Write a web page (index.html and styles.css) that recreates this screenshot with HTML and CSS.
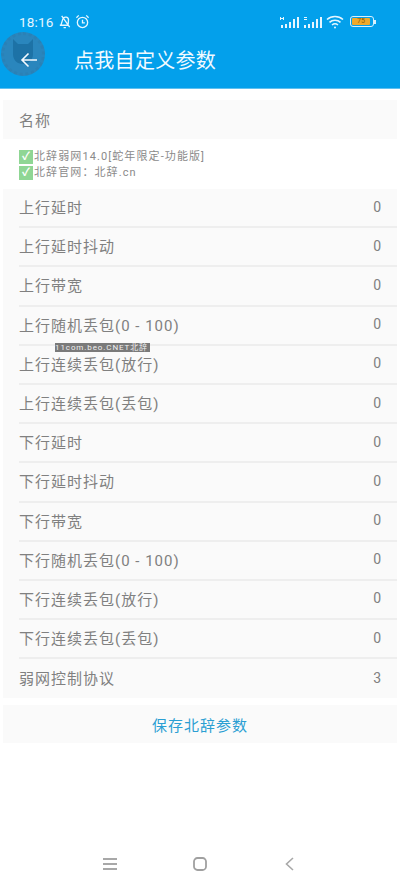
FILE: index.html
```html
<!DOCTYPE html>
<html lang="zh-CN">
    <head>
        <meta charset="UTF-8" />
        <meta name="viewport" content="width=device-width, initial-scale=1.0" />
        <title>点我自定义参数</title>
        <link rel="stylesheet" href="styles.css" />
    </head>
    <body>
        <div class="screen">
            <header class="appbar">
                <div class="status">
                    <div class="status-left">
                        <span class="time">18:16</span>
                        <svg class="status-icon" viewBox="0 0 16 16" fill="none" stroke="#e6f6ff" stroke-width="1.4">
                            <path d="M4 12.5 6 6c.6-2 2.4-3 4-2.6 1.7.4 2.5 2.2 2.2 4l-.4 4.6H3M5 2l8.5 12M7 14.5h2.5" />
                        </svg>
                        <svg class="status-icon" viewBox="0 0 16 16" fill="none" stroke="#e6f6ff" stroke-width="1.4">
                            <circle cx="8" cy="9" r="5.5" />
                            <path d="M8 6v3.5h2.5M1.5 4 4 1.5M14.5 4 12 1.5" />
                        </svg>
                    </div>
                    <div class="status-right">
                        <svg class="signal" viewBox="0 0 20 12" fill="#e6f6ff">
                            <path d="M1 9h2v3H1zM5 8h2v4H5zM9 6h2v6H9zM13 3h2v9h-2zM17 1h2v11h-2zM0 1h1v3H0zM3 1h1v3H3zM1 2h2v1H1z" />
                        </svg>
                        <svg class="signal" viewBox="0 0 20 12" fill="#e6f6ff">
                            <path d="M1 9h2v3H1zM5 8h2v4H5zM9 6h2v6H9zM13 3h2v9h-2zM17 1h2v11h-2zM1 1h3v1H1zM1 3h3v1H1z" />
                        </svg>
                        <svg class="wifi" viewBox="0 0 18 14" fill="none" stroke="#e6f6ff" stroke-width="1.6">
                            <path d="M1 4.5c4.5-4 11.5-4 16 0M3.5 7.3c3-2.7 8-2.7 11 0M6 10c1.700-1.400 4.300-1.400 6 0" />
                            <circle cx="9" cy="12.5" r="1" fill="#e6f6ff" stroke="none" />
                        </svg>
                        <div class="battery">
                            <span class="battery-body"><span class="battery-fill">75</span></span>
                            <span class="battery-tip"></span>
                        </div>
                    </div>
                </div>
                <div class="title-row">
                    <div class="back-badge">
                        <svg class="badge-cat" viewBox="0 0 44 44" fill="#1d72a6">
                            <path d="M12 7l5 5h10l5-5v15c0 6-4 10-10 10s-10-4-10-10z" />
                        </svg>
                    </div>
                    <svg class="back-arrow" viewBox="0 0 18 16" fill="none" stroke="#f4faff" stroke-width="1.6">
                        <path d="M17 8H2M8.5 1.5 2 8l6.5 6.5" />
                    </svg>
                    <h1 class="title">点我自定义参数</h1>
                </div>
            </header>

            <main class="content">
                <div class="name-row">名称</div>
                <div class="notes">
                    <p class="note"><span class="check">✓</span>北辞弱网14.0[蛇年限定-功能版]</p>
                    <p class="note"><span class="check">✓</span>北辞官网：北辞.cn</p>
                </div>
                <ul class="param-list">
                    <li class="param"><span>上行延时</span><span class="value">0</span></li>
                    <li class="param"><span>上行延时抖动</span><span class="value">0</span></li>
                    <li class="param"><span>上行带宽</span><span class="value">0</span></li>
                    <li class="param"><span>上行随机丢包(0 - 100)</span><span class="value">0</span></li>
                    <li class="param"><span>上行连续丢包(放行)</span><span class="value">0</span></li>
                    <li class="param"><span>上行连续丢包(丢包)</span><span class="value">0</span></li>
                    <li class="param"><span>下行延时</span><span class="value">0</span></li>
                    <li class="param"><span>下行延时抖动</span><span class="value">0</span></li>
                    <li class="param"><span>下行带宽</span><span class="value">0</span></li>
                    <li class="param"><span>下行随机丢包(0 - 100)</span><span class="value">0</span></li>
                    <li class="param"><span>下行连续丢包(放行)</span><span class="value">0</span></li>
                    <li class="param"><span>下行连续丢包(丢包)</span><span class="value">0</span></li>
                    <li class="param"><span>弱网控制协议</span><span class="value">3</span></li>
                </ul>
                <button class="save">保存北辞参数</button>
            </main>

            <span class="watermark">11com.beo.CNET北辞</span>

            <nav class="navbar">
                <svg class="nav-icon" viewBox="0 0 16 16" fill="none" stroke="#a8a8a8" stroke-width="1.8">
                    <path d="M1 3h14M1 8h14M1 13h14" />
                </svg>
                <svg class="nav-icon" viewBox="0 0 16 16" fill="none" stroke="#a0a0a0" stroke-width="1.8">
                    <rect x="2" y="2" width="12" height="12" rx="3.5" />
                </svg>
                <svg class="nav-icon" viewBox="0 0 16 16" fill="none" stroke="#a8a8a8" stroke-width="1.6">
                    <path d="M11 2 4.5 8l6.5 6" />
                </svg>
            </nav>
        </div>
    </body>
</html>
```

FILE: styles.css
```css
* {
    box-sizing: border-box;
}

body {
    margin: 0;
    background-color: #fff;
    color: #808080;
    font-family: Roboto, "Noto Sans CJK SC", sans-serif;
}

.screen {
    position: relative;
    display: flex;
    flex-direction: column;
    height: 888px;
    overflow: hidden;
}

.appbar {
    height: 89px;
    background-color: #03a0eb;
    border-bottom: 1px solid #5fc0f0;
}

.status {
    display: flex;
    justify-content: space-between;
    align-items: center;
    height: 21px;
    margin-top: 11px;
    padding: 0 24px 0 19px;
}

.status-left,
.status-right {
    display: flex;
    align-items: center;
    gap: 3px;
}

.time {
    color: #e6f6ff;
    font-size: 13.5px;
    letter-spacing: 0.2px;
}

.status-icon {
    width: 15px;
    height: 15px;
}

.signal {
    width: 20px;
    height: 12px;
}

.wifi {
    width: 18px;
    height: 14px;
}

.battery {
    display: flex;
    align-items: center;
    margin-left: 3px;
}

.battery-body {
    display: flex;
    width: 24px;
    height: 11px;
    padding: 1px;
    border: 1px solid #d8f0fc;
    border-radius: 3px;
}

.battery-fill {
    width: 18px;
    background-color: #f0a92a;
    border-radius: 1px;
    color: #8a5a08;
    font-size: 7px;
    line-height: 7px;
    text-align: center;
}

.battery-tip {
    width: 2px;
    height: 4px;
    background-color: #d8f0fc;
}

.title-row {
    position: relative;
    display: flex;
    align-items: center;
    height: 54px;
    padding-left: 74px;
}

.back-badge {
    position: absolute;
    top: 0;
    left: 1px;
    width: 44px;
    height: 44px;
    border: 3px dotted #2b81b5;
    border-radius: 50%;
    background-color: #2a86bd;
}

.badge-cat {
    position: absolute;
    top: -3px;
    left: -3px;
    width: 44px;
    height: 44px;
}

.back-arrow {
    position: absolute;
    top: 20px;
    left: 20px;
    width: 18px;
    height: 16px;
}

.title {
    margin: 0;
    color: #f2faff;
    font-size: 20px;
    font-weight: 400;
    letter-spacing: 0.3px;
}

.content {
    display: flex;
    flex-direction: column;
    padding: 11px 3px 0;
}

.name-row {
    display: flex;
    align-items: center;
    height: 39px;
    padding-left: 16px;
    background-color: #fafafa;
    font-size: 15px;
    letter-spacing: 1px;
}

.notes {
    display: flex;
    flex-direction: column;
    justify-content: center;
    height: 50px;
    padding-top: 2px;
    padding-left: 16px;
}

.note {
    display: flex;
    align-items: center;
    margin: 0;
    color: #8a8a8a;
    font-size: 11px;
    line-height: 16px;
    letter-spacing: 1.1px;
}

.check {
    display: flex;
    justify-content: center;
    align-items: center;
    width: 14px;
    height: 14px;
    margin-right: 1px;
    background-color: #8fd694;
    color: #fff;
    font-size: 11px;
    font-weight: 700;
    letter-spacing: 0;
}

.param-list {
    margin: 0;
    padding: 0;
    background-color: #fafafa;
    list-style: none;
}

.param {
    display: flex;
    justify-content: space-between;
    align-items: center;
    height: 39.2px;
    margin-left: 16px;
    padding-right: 16px;
    padding-bottom: 2px;
    border-bottom: 2px solid #eeeeee;
    font-size: 15px;
    letter-spacing: 1px;
}

.param:last-child {
    border-bottom: none;
}

.value {
    font-size: 14px;
    letter-spacing: 0;
}

.save {
    height: 38px;
    margin-top: 7px;
    border: none;
    background-color: #fafafa;
    color: #2b9fd3;
    font-family: inherit;
    font-size: 15px;
    letter-spacing: 1px;
}

.watermark {
    position: absolute;
    top: 343px;
    left: 55px;
    width: 95px;
    height: 9px;
    overflow: hidden;
    background-color: #7a7a7a;
    color: #f0f0f0;
    font-size: 8px;
    line-height: 9px;
    letter-spacing: 0.9px;
    white-space: nowrap;
}

.navbar {
    position: absolute;
    right: 0;
    bottom: 16px;
    left: 0;
    display: flex;
    justify-content: space-between;
    padding: 0 102px;
}

.nav-icon {
    width: 16px;
    height: 16px;
}
```
